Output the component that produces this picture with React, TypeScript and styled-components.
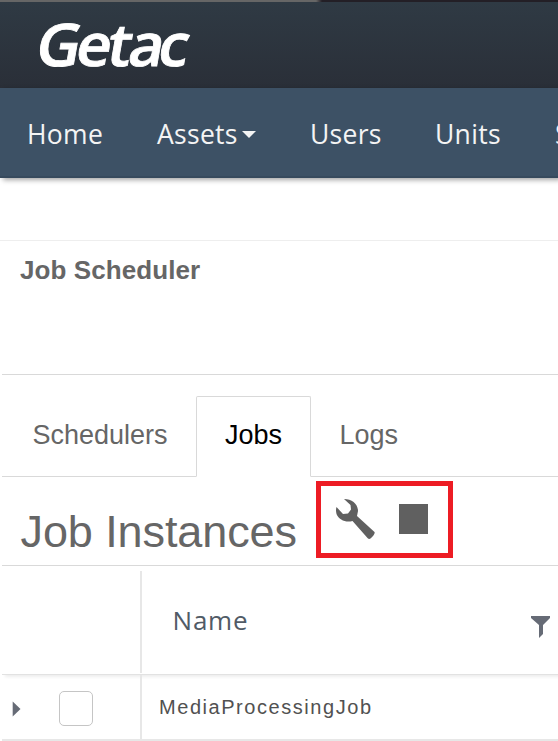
import React from "react";
import styled, { createGlobalStyle } from "styled-components";

const GlobalStyle = createGlobalStyle`
  *, *::before, *::after { box-sizing: border-box; }
  body { margin: 0; background: #fff; overflow: hidden; }
`;

const sans = `"Liberation Sans", Arial, sans-serif`;
const humanist = `"Open Sans", "Noto Sans", sans-serif`;

const Page = styled.div`
  width: 558px;
  height: 741px;
  overflow: hidden;
  background: #fff;
  font-family: ${sans};
  color: #666;
`;

const WindowEdge = styled.div`
  height: 2px;
  background: linear-gradient(90deg, #666 0 316px, #231f26 322px);
`;

const Brand = styled.header`
  height: 86px;
  background: linear-gradient(#2f3a44, #2a2f38);
`;

const Logo = styled.svg`
  display: block;
  font-family: ${humanist};
  font-size: 59px;
  font-weight: 600;
  fill: #fff;
  stroke: #fff;
  stroke-width: 0.8px;
`;

const Nav = styled.nav`
  position: relative;
  display: flex;
  height: 90px;
  padding-left: 27px;
  gap: 54px;
  white-space: nowrap;
  background: #3d5165;
  border-bottom: 2px solid #374a5d;
  box-shadow: 3px 2px 5px rgba(0, 0, 0, 0.36);
`;

const NavItem = styled.a<{ $width: number }>`
  display: flex;
  align-items: center;
  flex: 0 0 ${(p) => p.$width}px;
  min-width: 0;
  height: 90px;
  padding-top: 2px;
  font: 400 26.5px/88px ${humanist};
  letter-spacing: 0.3px;
  color: #f4f4f4;
`;

const Caret = styled.span`
  margin-left: 4px;
  border: 7px solid transparent;
  border-top-color: #f4f4f4;
  border-bottom: 0;
`;

const TitleBar = styled.section`
  height: 134px;
  margin-top: 62px;
  padding: 13px 20px;
  border-top: 1px solid #eee;
`;

const PageTitle = styled.h1`
  margin: 0;
  font: 700 26px/32px ${sans};
  letter-spacing: 0.08px;
`;

const Content = styled.main`
  margin-left: 2px;
  border-top: 1px solid #d9d9d9;
`;

const Tabs = styled.div`
  display: flex;
  height: 102px;
  padding-top: 21px;
`;

const Tab = styled.div<{ $width?: number; $active?: boolean }>`
  flex: ${(p) => (p.$width ? `0 0 ${p.$width}px` : "1")};
  height: 81px;
  padding-left: ${(p) => (p.$active ? 28 : p.$width ? 30.5 : 28.5)}px;
  font: 400 27px/76px ${sans};
  color: ${(p) => (p.$active ? "#000" : "#666")};
  border: 1px solid ${(p) => (p.$active ? "#d9d9d9" : "transparent")};
  border-bottom-color: ${(p) => (p.$active ? "transparent" : "#d9d9d9")};
  border-radius: ${(p) => (p.$active ? "2px 2px 0 0" : 0)};
  border-width: ${(p) => (p.$active ? "1px" : "1px 0")};
`;

const Heading = styled.div`
  display: flex;
  height: 89px;
  padding: 4px 0 0 18px;
  border-bottom: 1px solid #d9d9d9;
`;

const SectionTitle = styled.h2`
  width: 296px;
  margin: 0;
  padding-left: 0.5px;
  font: 400 45px/102px ${sans};
  letter-spacing: -0.1px;
  white-space: nowrap;
`;

const Actions = styled.div`
  display: flex;
  width: 137px;
  height: 77px;
  padding: 13px 0 0 15px;
  gap: 24px;
  border: 5px solid #ed1c24;
`;

const StopButton = styled.button`
  width: 29px;
  height: 30px;
  margin-top: 5px;
  padding: 0;
  border: 0;
  background: #606060;
`;

const Grid = styled.div`
  padding-top: 5px;
`;

const GridHead = styled.div`
  display: flex;
  height: 104px;
  border-bottom: 1px solid #e2e2e2;
  box-shadow: 3px 2px 3px rgba(0, 0, 0, 0.07);
`;

const GridRow = styled.div`
  display: flex;
  height: 66px;
  border-bottom: 2px solid #e7e7e7;
`;

const ControlCell = styled.div<{ $head?: boolean }>`
  display: flex;
  width: 140px;
  height: ${(p) => (p.$head ? "102px" : "auto")};
  padding: 16px 0 0 10px;
  gap: 38px;
  border-right: 2px solid #e7e7e7;
`;

const Expander = styled.svg`
  margin-top: 10px;
`;

const Checkbox = styled.span`
  width: 34px;
  height: 35px;
  border: 1px solid #c5c5c5;
  border-radius: 5px;
  background: #fff;
`;

const HeadCell = styled.div`
  display: flex;
  flex: 1;
  justify-content: space-between;
  padding: 0 8px 0 30.5px;
  font: 400 26px/98px ${humanist};
  letter-spacing: 0.8px;
  color: #515b66;
`;

const FilterIcon = styled.svg`
  margin-top: 45px;
`;

const Cell = styled.div`
  padding-left: 17px;
  font: 400 20px/64px ${sans};
  letter-spacing: 1.55px;
  color: #515151;
`;

export default function App() {
  return (
    <Page>
      <GlobalStyle />
      <WindowEdge />
      <Brand>
        <Logo width="240" height="86" aria-label="Getac">
          <text transform="translate(33.5 64) skewX(-10) scale(1.04 1)" x="0 38.5 68.5 89 117.5">Getac</text>
        </Logo>
      </Brand>
      <Nav>
        <NavItem $width={76}>Home</NavItem>
        <NavItem $width={99}>Assets<Caret /></NavItem>
        <NavItem $width={71}>Users</NavItem>
        <NavItem $width={66}>Units</NavItem>
        <NavItem $width={100}>S</NavItem>
      </Nav>
      <TitleBar>
        <PageTitle>Job Scheduler</PageTitle>
      </TitleBar>
      <Content>
        <Tabs>
          <Tab $width={194}>Schedulers</Tab>
          <Tab $width={115} $active>Jobs</Tab>
          <Tab>Logs</Tab>
        </Tabs>
        <Heading>
          <SectionTitle>Job Instances</SectionTitle>
          <Actions>
            <svg width="39" height="40" viewBox="0 0 39 40" fill="#606060">
              <path d="M8 0C16 0 22 5 22 12L21 17L38.5 33Q39.5 35 34.5 39.5Q33 40.5 31.5 39L16.5 22C10 24 3 21 0.5 15Q-0.5 11 0.5 8L7 15L12 14.5L15 10.5L14.5 6Z" />
            </svg>
            <StopButton aria-label="Stop" />
          </Actions>
        </Heading>
        <Grid>
          <GridHead>
            <ControlCell $head />
            <HeadCell>
              Name
              <FilterIcon width="19" height="22" viewBox="0 0 19 22" fill="#666b76">
                <path d="M0 0H19V2L12 9V18L8 22V9L0 2Z" />
              </FilterIcon>
            </HeadCell>
          </GridHead>
          <GridRow>
            <ControlCell>
              <Expander width="9" height="16" viewBox="0 0 9 16" fill="#666b76">
                <path d="M0.7 0.5L8.5 8L0.7 15.5Z" />
              </Expander>
              <Checkbox role="checkbox" />
            </ControlCell>
            <Cell>MediaProcessingJob</Cell>
          </GridRow>
        </Grid>
      </Content>
    </Page>
  );
}
